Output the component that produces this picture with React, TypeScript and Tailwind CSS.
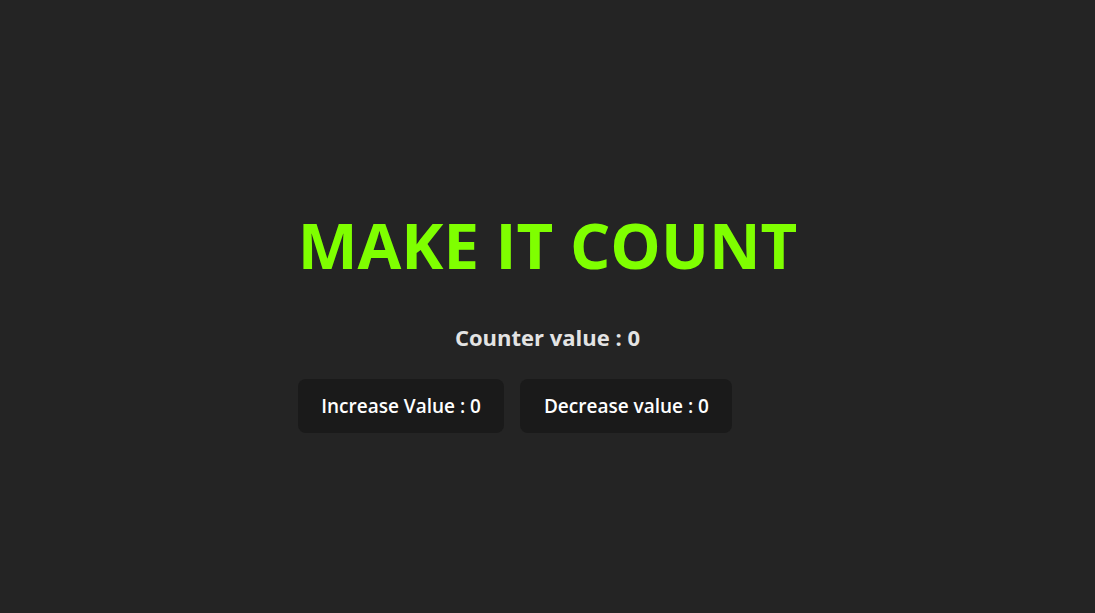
import React, { useState } from 'react';

const App = () => {
  const [count, setCount] = useState(0);

  return (
    <div
      className="min-h-screen bg-[#242424] flex items-center justify-center pt-[30px]"
      style={{ fontFamily: '"Open Sans", "Noto Sans", sans-serif' }}
    >
      <div className="flex flex-col w-fit">
        <h1 className="text-[63.5px] leading-[1.1] font-bold text-[#7fff00] text-center">
          MAKE IT COUNT
        </h1>
        <p className="mt-[41px] text-[22px] leading-[1.5] font-bold text-[#e3e3e3] text-center">
          Counter value : {count}
        </p>
        <div className="flex gap-4 mt-[25px]">
          <button
            className="bg-[#1a1a1a] text-white text-[19px] leading-[1.5] font-semibold px-[22.5px] py-[11.5px] rounded-lg border border-transparent"
            onClick={() => setCount(count + 1)}
          >
            Increase Value : {count}
          </button>
          <button
            className="bg-[#1a1a1a] text-white text-[19px] leading-[1.5] font-semibold px-[22.5px] py-[11.5px] rounded-lg border border-transparent"
            onClick={() => setCount(count - 1)}
          >
            Decrease value : {count}
          </button>
        </div>
      </div>
    </div>
  );
};

export default App;
